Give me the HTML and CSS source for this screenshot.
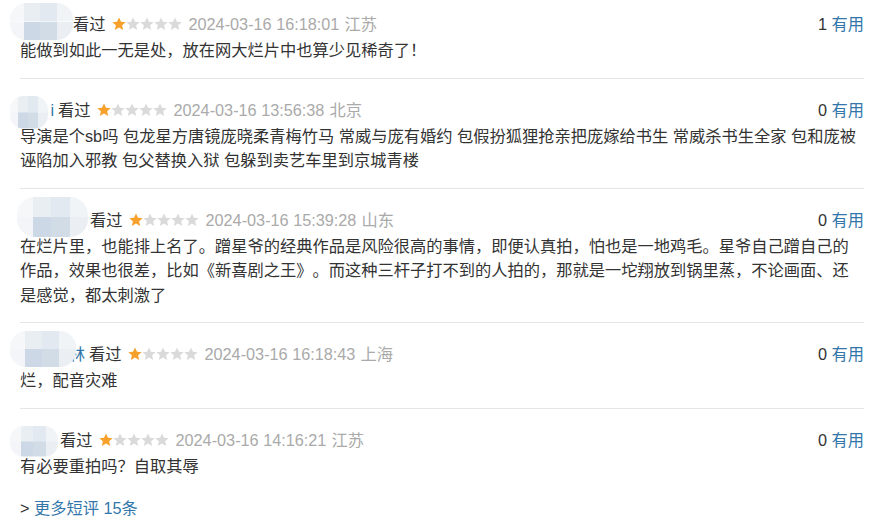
FILE: index.html
```html
<!doctype html>
<html lang="zh-CN">
<head>
  <meta charset="utf-8">
  <title>短评</title>
  <link rel="stylesheet" href="styles.css">
</head>
<body>
<section class="comments">

  <div class="comment">
    <div class="comment-head">
      <div class="info">
        <span class="name name-1"><span class="mask"></span></span>
        <span class="watched">看过</span>
        <svg class="stars" viewBox="0 0 70 14"><use href="#star" x="0" class="on"/><use href="#star" x="14"/><use href="#star" x="28"/><use href="#star" x="42"/><use href="#star" x="56"/></svg>
        <span class="time">2024-03-16 16:18:01</span>
        <span class="loc">江苏</span>
      </div>
      <div class="votes"><span class="count">1</span> <a href="#">有用</a></div>
    </div>
    <p class="text">能做到如此一无是处，放在网大烂片中也算少见稀奇了！</p>
  </div>

  <div class="comment">
    <div class="comment-head">
      <div class="info">
        <span class="name name-2"><span class="mask"></span>i</span>
        <span class="watched">看过</span>
        <svg class="stars" viewBox="0 0 70 14"><use href="#star" x="0" class="on"/><use href="#star" x="14"/><use href="#star" x="28"/><use href="#star" x="42"/><use href="#star" x="56"/></svg>
        <span class="time">2024-03-16 13:56:38</span>
        <span class="loc">北京</span>
      </div>
      <div class="votes"><span class="count">0</span> <a href="#">有用</a></div>
    </div>
    <p class="text">导演是个sb吗 包龙星方唐镜庞晓柔青梅竹马 常威与庞有婚约 包假扮狐狸抢亲把庞嫁给书生 常威杀书生全家 包和庞被诬陷加入邪教 包父替换入狱 包躲到卖艺车里到京城青楼</p>
  </div>

  <div class="comment">
    <div class="comment-head">
      <div class="info">
        <span class="name name-3"><span class="mask"></span></span>
        <span class="watched">看过</span>
        <svg class="stars" viewBox="0 0 70 14"><use href="#star" x="0" class="on"/><use href="#star" x="14"/><use href="#star" x="28"/><use href="#star" x="42"/><use href="#star" x="56"/></svg>
        <span class="time">2024-03-16 15:39:28</span>
        <span class="loc">山东</span>
      </div>
      <div class="votes"><span class="count">0</span> <a href="#">有用</a></div>
    </div>
    <p class="text">在烂片里，也能排上名了。蹭星爷的经典作品是风险很高的事情，即便认真拍，怕也是一地鸡毛。星爷自己蹭自己的作品，效果也很差，比如《新喜剧之王》。而这种三杆子打不到的人拍的，那就是一坨翔放到锅里蒸，不论画面、还是感觉，都太刺激了</p>
  </div>

  <div class="comment">
    <div class="comment-head">
      <div class="info">
        <span class="name name-4"><span class="mask"></span>林</span>
        <span class="watched">看过</span>
        <svg class="stars" viewBox="0 0 70 14"><use href="#star" x="0" class="on"/><use href="#star" x="14"/><use href="#star" x="28"/><use href="#star" x="42"/><use href="#star" x="56"/></svg>
        <span class="time">2024-03-16 16:18:43</span>
        <span class="loc">上海</span>
      </div>
      <div class="votes"><span class="count">0</span> <a href="#">有用</a></div>
    </div>
    <p class="text">烂，配音灾难</p>
  </div>

  <div class="comment">
    <div class="comment-head">
      <div class="info">
        <span class="name name-5"><span class="mask"></span></span>
        <span class="watched">看过</span>
        <svg class="stars" viewBox="0 0 70 14"><use href="#star" x="0" class="on"/><use href="#star" x="14"/><use href="#star" x="28"/><use href="#star" x="42"/><use href="#star" x="56"/></svg>
        <span class="time">2024-03-16 14:16:21</span>
        <span class="loc">江苏</span>
      </div>
      <div class="votes"><span class="count">0</span> <a href="#">有用</a></div>
    </div>
    <p class="text">有必要重拍吗？自取其辱</p>
  </div>

  <p class="more">&gt; <a href="#">更多短评 15条</a></p>
</section>

<svg width="0" height="0" class="defs">
  <defs>
    <polygon id="star" points="7,0.4 9,4.8 13.7,5.2 10.1,8.3 11.2,12.9 7,10.5 2.8,12.9 3.9,8.3 0.3,5.2 5,4.8"/>
  </defs>
</svg>
</body>
</html>
```
FILE: styles.css
```css
* {
  box-sizing: border-box;
  margin: 0;
  padding: 0;
}
body {
  background: #fff;
  color: #333;
  font-family: "Liberation Sans", "Noto Sans CJK SC", sans-serif;
  font-size: 16.25px;
  text-spacing-trim: space-all;
}
a {
  color: #3377aa;
  text-decoration: none;
}
.defs {
  position: absolute;
}
.comments {
  width: 864px;
  padding-left: 20px;
}
.comment {
  padding: 18px 0 15px;
  border-bottom: 1px solid #e6e6e6;
}
.comment:first-child {
  padding-top: 11px;
}
.comment:last-of-type {
  border-bottom: none;
  padding-bottom: 0;
}
.comment-head {
  display: flex;
  justify-content: space-between;
  align-items: center;
  height: 26px;
  line-height: 26px;
}
.info {
  display: flex;
  align-items: center;
  height: 26px;
  white-space: nowrap;
}
.name {
  position: relative;
  display: inline-block;
  align-self: stretch;
  text-align: right;
  color: #3377aa;
  margin-right: 4px;
}
.name .mask {
  position: absolute;
  border-radius: 16px;
  background:
    linear-gradient(90deg, #f5f7f9 0 22%, #e9eef3 22% 48%, #e3e9f0 48% 74%, #f1f4f7 74%) top / 100% 50% no-repeat,
    linear-gradient(90deg, #f3f5f8 0 22%, #ccd8e5 22% 48%, #d2dce7 48% 74%, #ebeff4 74%) bottom / 100% 50% no-repeat;
}
.name-1 { width: 49px; }
.name-1 .mask { left: -10px; top: -8px; width: 63px; height: 37px; }
.name-2 { width: 34px; }
.name-2 .mask { left: -10px; top: -1px; width: 38px; height: 33px; border-radius: 14px; }
.name-3 { width: 66px; }
.name-3 .mask { left: -3px; top: -10px; width: 71px; height: 40px; border-radius: 18px; }
.name-4 { width: 65px; }
.name-4 .mask { left: -10px; top: -10px; width: 66px; height: 36px; border-radius: 16px; }
.name-5 { width: 36px; }
.name-5 .mask { left: -10px; top: -1px; width: 48px; height: 31px; border-radius: 14px; }
.watched {
  color: #333;
}
.stars {
  width: 70px;
  height: 14px;
  margin: 0 7px 0 6px;
  fill: #dadada;
}
.stars .on {
  fill: #f7a12b;
}
.time, .loc {
  color: #aaa;
}
.loc {
  margin-left: 5px;
}
.votes {
  white-space: nowrap;
}
.votes .count {
  color: #333;
}
.text {
  margin-top: 1px;
  line-height: 24.5px;
  color: #333;
}
.more {
  margin-top: 17px;
  line-height: 26px;
  color: #333;
}
```
